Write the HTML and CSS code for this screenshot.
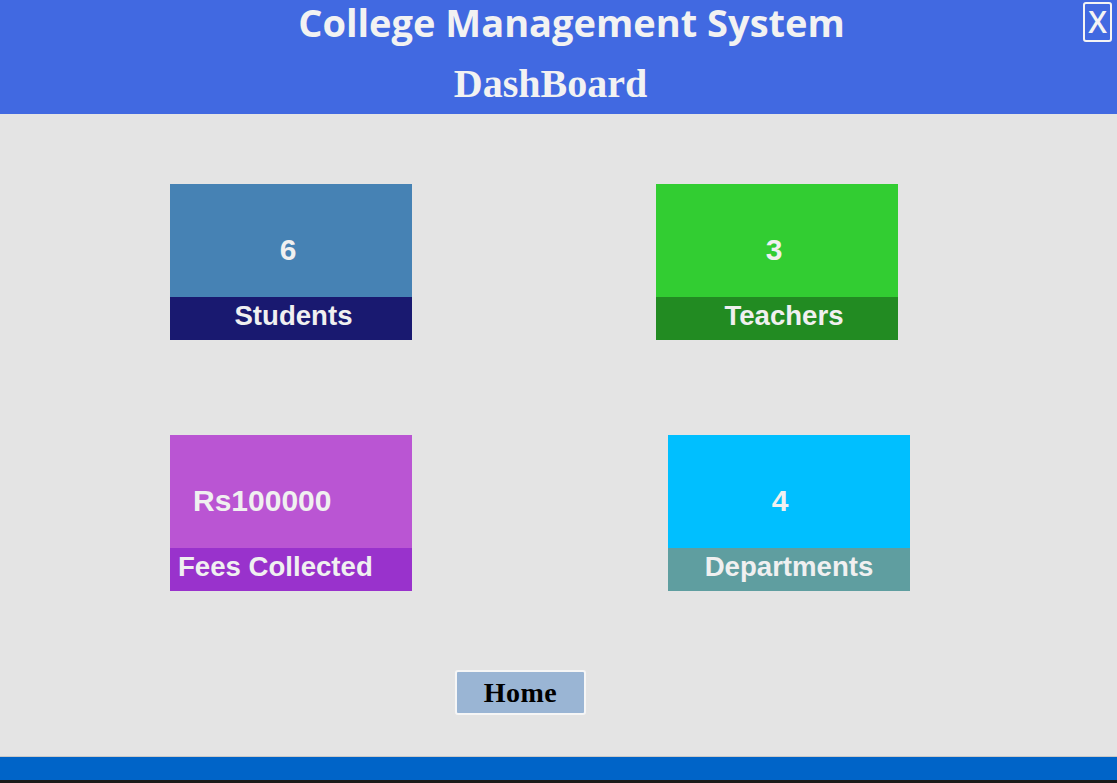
FILE: index.html
```html
<!DOCTYPE html>
<html>
<head>
<meta charset="utf-8">
<title>College Management System</title>
<link rel="stylesheet" href="styles.css">
</head>
<body>
<div class="app">
  <header class="header">
    <div class="title">College Management System</div>
    <div class="subtitle">DashBoard</div>
    <button class="close">X</button>
  </header>
  <main class="main">
    <div class="row row-1">
      <div class="card card-students">
        <div class="card-top"><span class="num">6</span></div>
        <div class="card-bottom"><span class="lbl">Students</span></div>
      </div>
      <div class="card card-teachers">
        <div class="card-top"><span class="num">3</span></div>
        <div class="card-bottom"><span class="lbl">Teachers</span></div>
      </div>
    </div>
    <div class="row row-2">
      <div class="card card-fees">
        <div class="card-top"><span class="num">Rs100000</span></div>
        <div class="card-bottom"><span class="lbl">Fees Collected</span></div>
      </div>
      <div class="card card-depts">
        <div class="card-top"><span class="num">4</span></div>
        <div class="card-bottom"><span class="lbl">Departments</span></div>
      </div>
    </div>
    <div class="home-row">
      <button class="home">Home</button>
    </div>
  </main>
  <footer class="footer"></footer>
</div>
</body>
</html>
```
FILE: styles.css
```css
html, body {
  margin: 0;
  padding: 0;
}
body {
  width: 1117px;
  height: 783px;
  overflow: hidden;
  background: #e4e4e4;
}
.app {
  display: flex;
  flex-direction: column;
  height: 783px;
}
.header {
  position: relative;
  height: 114px;
  flex: 0 0 114px;
  background: #4169e1;
  color: #f2f2f2;
  text-align: center;
}
.title {
  font-family: "Open Sans", "Noto Sans", sans-serif;
  font-weight: 700;
  font-size: 38px;
  line-height: 44px;
  padding-left: 26px;
}
.subtitle {
  margin-top: 18px;
  font-family: "Liberation Serif", serif;
  font-weight: 700;
  font-size: 40px;
  line-height: 44px;
  padding-right: 16px;
}
.close {
  position: absolute;
  top: 2px;
  right: 5px;
  width: 29px;
  height: 40px;
  padding: 0;
  background: #4169e1;
  border: 2px solid #f4f4f4;
  border-radius: 3px;
  color: #f4f4f4;
  font-family: "Open Sans", sans-serif;
  font-weight: 600;
  font-size: 30px;
  line-height: 34px;
}
.main {
  flex: 1 1 auto;
  display: flex;
  flex-direction: column;
  padding-top: 70px;
  box-sizing: border-box;
}
.row {
  display: flex;
  padding-left: 170px;
}
.row-1 {
  gap: 244px;
}
.row-2 {
  margin-top: 95px;
  gap: 256px;
}
.card {
  width: 242px;
  height: 156px;
  display: flex;
  flex-direction: column;
  color: #f0f0f0;
  font-family: "Liberation Sans", Arial, sans-serif;
  font-weight: 700;
}
.card-top {
  height: 113px;
  box-sizing: border-box;
  padding-top: 51px;
  text-align: center;
}
.num {
  display: block;
  font-size: 30px;
  line-height: 30px;
}
.card-bottom {
  height: 43px;
  box-sizing: border-box;
  padding-top: 3px;
  text-align: center;
}
.lbl {
  display: block;
  font-size: 27.6px;
  line-height: 32px;
}
.card-students .card-top { background: #4682b4; }
.card-students .card-bottom { background: #191970; }
.card-students .num { padding-right: 6px; }
.card-students .lbl { padding-left: 5px; }

.card-teachers .card-top { background: #32cd32; }
.card-teachers .card-bottom { background: #228b22; }
.card-teachers .num { padding-right: 6px; }
.card-teachers .lbl { padding-left: 14px; }

.card-fees .card-top { background: #ba55d3; }
.card-fees .card-bottom { background: #9932cc; }
.card-fees .num { text-align: left; padding-left: 23px; }
.card-fees .lbl { text-align: left; padding-left: 8px; }

.card-depts .card-top { background: #00bfff; }
.card-depts .card-bottom { background: #5f9ea0; }
.card-depts .num { padding-right: 18px; }

.home-row {
  display: flex;
  padding-left: 455px;
  margin-top: 79px;
}
.home {
  width: 131px;
  height: 45px;
  padding: 0;
  background: #9ab5d4;
  border: 2px solid #f6f6f6;
  border-radius: 3px;
  color: #000;
  font-family: "Liberation Serif", serif;
  font-weight: 700;
  font-size: 28px;
  letter-spacing: 0.5px;
  line-height: 38px;
}
.footer {
  flex: 0 0 27px;
  height: 27px;
  box-sizing: border-box;
  background: #0064c8;
  border-top: 1px solid #c8c8c8;
  border-bottom: 3px solid #1a1a1a;
}
```
